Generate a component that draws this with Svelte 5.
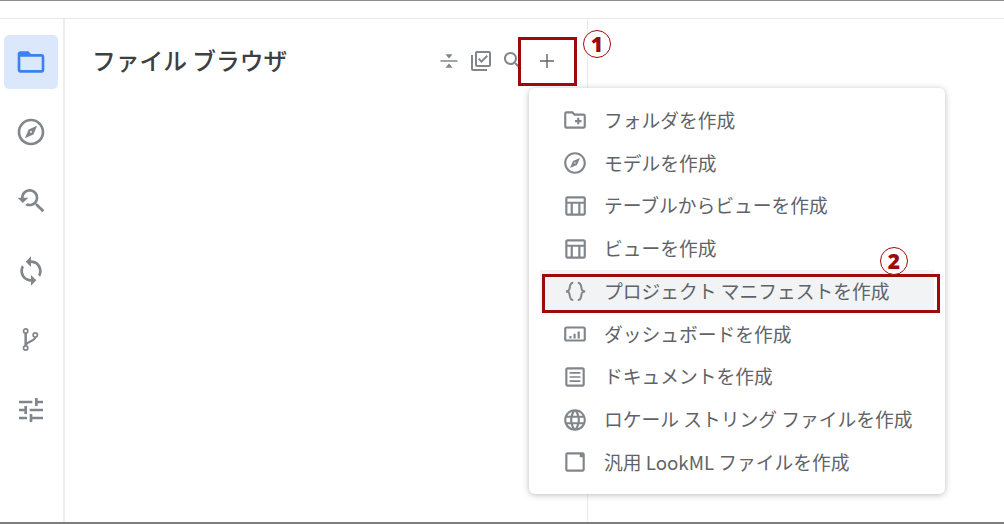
<script>
	const explore = 'M12 2C6.48 2 2 6.48 2 12s4.48 10 10 10 10-4.48 10-10S17.52 2 12 2zm0 18c-4.41 0-8-3.59-8-8s3.59-8 8-8 8 3.59 8 8-3.59 8-8 8zM7.4 16.6l6.4-2.8 2.8-6.4-6.4 2.8-2.8 6.4zm4.6-5.3c.39 0 .7.31.7.7s-.31.7-.7.7-.7-.31-.7-.7.31-.7.7-.7z';

	const railIcons = [
		{ label: 'ファイル', d: 'M20 6h-8l-2-2H4c-1.1 0-1.99.9-1.99 2L2 18c0 1.1.9 2 2 2h16c1.1 0 2-.9 2-2V8c0-1.1-.9-2-2-2zm0 12H4V8h16v10z', active: true },
		{ label: '開発', d: explore },
		{ label: '検索', d: 'M17.01 14h-.8l-.27-.27c.98-1.14 1.57-2.61 1.57-4.23 0-3.59-2.91-6.5-6.5-6.5s-6.5 3-6.5 6.5H2l3.84 4 4.16-4H6.51C6.51 7 8.53 5 11.01 5s4.5 2.01 4.5 4.5c0 2.48-2.02 4.5-4.5 4.5-.65 0-1.26-.14-1.82-.38L7.71 15.1c.97.57 2.09.9 3.3.9 1.61 0 3.08-.59 4.22-1.57l.27.27v.79l5.01 5L22 19l-4.99-5z' },
		{ label: '同期', d: 'M12 4V1L8 5l4 4V6c3.31 0 6 2.69 6 6 0 1.01-.25 1.97-.7 2.8l1.46 1.46C19.54 15.03 20 13.57 20 12c0-4.42-3.58-8-8-8zm0 14c-3.31 0-6-2.69-6-6 0-1.01.25-1.97.7-2.8L5.24 7.74C4.46 8.97 4 10.43 4 12c0 4.42 3.58 8 8 8v3l4-4-4-4v3z' },
		{ label: 'ブランチ', branch: true },
		{ label: '設定', d: 'M3 17v2h6v-2H3zM3 5v2h10V5H3zm10 16v-2h8v-2h-8v-2h-2v6h2zM7 9v2H3v2h4v2h2V9H7zm14 4v-2H11v2h10zm-6-4h2V7h4V5h-4V3h-2v6z' }
	];

	const actions = [
		{ label: 'すべて折りたたむ', d: 'M3.5 11.3h17v1.4h-17zM8.4 5.2h7.2L12 9.4zM8.4 18.8h7.2L12 14.6z' },
		{ label: '選択', d: 'M20 4v12H8V4h12m0-2H8c-1.1 0-2 .9-2 2v12c0 1.1.9 2 2 2h12c1.1 0 2-.9 2-2V4c0-1.1-.9-2-2-2zm-7.53 12L9 10.5l1.4-1.41 2.07 2.08L17.6 6 19 7.41 12.47 14zM4 6H2v14c0 1.1.9 2 2 2h14v-2H4V6z' },
		{ label: '検索', d: 'M15.5 14h-.79l-.28-.27C15.41 12.59 16 11.11 16 9.5 16 5.91 13.09 3 9.5 3S3 5.91 3 9.5 5.91 16 9.5 16c1.61 0 3.09-.59 4.23-1.57l.27.28v.79l5 4.99L20.49 19l-4.99-5zm-6 0C7.01 14 5 11.99 5 9.5S7.01 5 9.5 5 14 7.01 14 9.5 11.99 14 9.5 14z' },
		{ label: '追加', plus: true, d: 'M19 12.7h-6.3V19h-1.4v-6.3H5v-1.4h6.3V5h1.4v6.3H19z' }
	];

	const table = 'M20 3H5c-1.1 0-2 .9-2 2v14c0 1.1.9 2 2 2h15c1.1 0 2-.9 2-2V5c0-1.1-.9-2-2-2zm0 2v3H5V5h15zm-5 14h-5v-9h5v9zM5 10h3v9H5v-9zm12 9v-9h3v9h-3z';

	const menu = [
		{ text: 'フォルダを作成', d: 'M20 6h-8l-2-2H4c-1.11 0-1.99.89-1.99 2L2 18c0 1.11.89 2 2 2h16c1.11 0 2-.89 2-2V8c0-1.11-.89-2-2-2zm0 12H4V6h5.17l2 2H20v10zm-8-4h2v2h2v-2h2v-2h-2v-2h-2v2h-2z' },
		{ text: 'モデルを作成', d: explore },
		{ text: 'テーブルからビューを作成', d: table },
		{ text: 'ビューを作成', d: table },
		{ text: 'プロジェクト マニフェストを作成', braces: true, hover: true },
		{ text: 'ダッシュボードを作成', d: 'M20 5H4c-1.1 0-2 .9-2 2v10c0 1.1.9 2 2 2h16c1.1 0 2-.9 2-2V7c0-1.1-.9-2-2-2zm0 12H4V7h16v10zM6.8 13.8h2v2.4h-2zm3.8-2h2v4.4h-2zm3.8-2h2v6.4h-2z' },
		{ text: 'ドキュメントを作成', d: 'M19 5v14H5V5h14m0-2H5c-1.1 0-2 .9-2 2v14c0 1.1.9 2 2 2h14c1.1 0 2-.9 2-2V5c0-1.1-.9-2-2-2zM7 15h10v1.6H7zm0-3.8h10v1.6H7zM7 7.4h10V9H7z' },
		{ text: 'ロケール ストリング ファイルを作成', d: 'M11.99 2C6.47 2 2 6.48 2 12s4.47 10 9.99 10C17.52 22 22 17.52 22 12S17.52 2 11.99 2zm6.93 6h-2.95c-.32-1.25-.78-2.45-1.38-3.56 1.84.63 3.37 1.91 4.33 3.56zM12 4.04c.83 1.2 1.48 2.53 1.91 3.96h-3.82c.43-1.43 1.08-2.76 1.91-3.96zM4.26 14C4.1 13.36 4 12.69 4 12s.1-1.36.26-2h3.38c-.08.66-.14 1.32-.14 2s.06 1.34.14 2H4.26zm.82 2h2.95c.32 1.25.78 2.45 1.38 3.56-1.84-.63-3.37-1.9-4.33-3.56zm2.95-8H5.08c.96-1.66 2.49-2.93 4.33-3.56C8.81 5.55 8.35 6.75 8.03 8zM12 19.96c-.83-1.2-1.48-2.53-1.91-3.96h3.82c-.43 1.43-1.08 2.76-1.91 3.96zM14.34 14H9.66c-.09-.66-.16-1.32-.16-2s.07-1.35.16-2h4.68c.09.65.16 1.32.16 2s-.07 1.34-.16 2zm.25 5.56c.6-1.11 1.06-2.31 1.38-3.56h2.95c-.96 1.65-2.49 2.93-4.33 3.56zM16.36 14c.08-.66.14-1.32.14-2s-.06-1.34-.14-2h3.38c.16.64.26 1.31.26 2s-.1 1.36-.26 2h-3.38z' },
		{ text: '汎用 LookML ファイルを作成', d: 'M5 3h14c1.1 0 2 .9 2 2v14c0 1.1-.9 2-2 2H5c-1.1 0-2-.9-2-2V5c0-1.1.9-2 2-2zm0 2v14h14V7.6h-2.6V5H5z' }
	];
</script>

<div class="page">
	<div class="topbar"></div>
	<div class="main">
		<nav class="rail">
			{#each railIcons as icon}
				<button class="rail-btn" class:active={icon.active} aria-label={icon.label}>
					<svg viewBox="0 0 24 24" width="32" height="32">
						{#if icon.branch}
							<g fill="none" stroke="currentColor">
								<circle cx="8" cy="5.3" r="1.6" stroke-width="1.3" />
								<circle cx="15.2" cy="8.2" r="1.6" stroke-width="1.3" />
								<circle cx="8" cy="18" r="1.6" stroke-width="1.3" />
								<path d="M8 7v9.3" stroke-width="1.9" />
								<path d="M15.2 9.9c0 2.9-6.6 3-7.2 6.2" stroke-width="1.6" />
							</g>
						{:else}
							<path d={icon.d} fill="currentColor" fill-rule="evenodd" />
						{/if}
					</svg>
				</button>
			{/each}
		</nav>

		<section class="panel">
			<header class="panel-head">
				<h1>ファイル ブラウザ</h1>
				<div class="actions">
					{#each actions as a}
						<button class="action" class:plus={a.plus} aria-label={a.label}>
							<svg viewBox="0 0 24 24" width="24" height="24"><path d={a.d} fill="currentColor" /></svg>
						</button>
					{/each}
				</div>
			</header>
		</section>
	</div>
	<div class="bottombar"></div>

	<!-- dropdown floats over the panel -->
	<ul class="menu">
		{#each menu as item}
			<li class="menu-item" class:hover={item.hover}>
				<svg viewBox="0 0 24 24" width="26" height="26">
					{#if item.braces}
						<path d="M10.4 4.4C8.4 4.4 7.9 5.4 7.5 7L6.8 10.4C6.5 11.6 5.5 12.4 3.6 12.4 5.5 12.4 6.5 13.2 6.8 14.4L7.5 17.8C7.9 19.4 8.4 20.4 10.4 20.4M14.6 4.4C16.6 4.4 17.1 5.4 17.5 7L18.2 10.4C18.5 11.6 19.5 12.4 21.4 12.4 19.5 12.4 18.5 13.2 18.2 14.4L17.5 17.8C17.1 19.4 16.6 20.4 14.6 20.4" fill="none" stroke="currentColor" stroke-width="1.8" />
					{:else}
						<path d={item.d} fill="currentColor" fill-rule="evenodd" />
					{/if}
				</svg>
				<span>{item.text}</span>
			</li>
		{/each}
	</ul>

	<!-- annotations on top of the screenshot -->
	<div class="mark mark-one"></div>
	<div class="mark mark-two"></div>
	<div class="num num-one">1</div>
	<div class="num num-two">2</div>
</div>

<style>
	:global(body) {
		margin: 0;
		background: #fff;
	}

	.page {
		position: relative;
		height: 524px;
		display: flex;
		flex-direction: column;
		overflow: hidden;
		font-family: 'Noto Sans CJK JP', 'Noto Sans', sans-serif;
		color: #3c4043;
	}

	.topbar {
		flex-shrink: 0;
		border-top: 1px solid #8f8f8f;
		border-bottom: 1px solid #e6e7e8;
		box-sizing: border-box;
		height: 19px;
	}

	.main {
		flex: 1;
		display: flex;
		min-height: 0;
	}

	.bottombar {
		height: 2px;
		flex-shrink: 0;
		background: #7d7d7d;
	}

	.rail {
		width: 65px;
		flex-shrink: 0;
		box-sizing: border-box;
		border-right: 2px solid #eceded;
		padding: 16px 0 0 4px;
		display: flex;
		flex-direction: column;
		gap: 15.5px;
	}

	.rail-btn {
		width: 54px;
		height: 54px;
		padding: 0;
		border: 0;
		border-radius: 5px;
		background: none;
		color: #80868b;
		display: flex;
		align-items: center;
		justify-content: center;
	}

	.rail-btn.active {
		background: #dbe8fb;
		color: #3b82f0;
	}

	.panel {
		width: 523px;
		flex-shrink: 0;
		box-sizing: border-box;
		border-right: 1px solid #e8e9ea;
	}

	.panel-head {
		display: flex;
		align-items: center;
		height: 84px;
		padding: 0 26px 0 27px;
	}

	h1 {
		margin: 0;
		font-size: 23.75px;
		font-weight: 500;
		line-height: 1;
		color: #3c4043;
		flex: 1;
		position: relative;
		top: -1px;
	}

	.actions {
		display: flex;
		position: relative;
		left: -1px;
	}

	.action {
		width: 32px;
		height: 32px;
		padding: 0;
		border: 0;
		background: none;
		color: #80868b;
		display: flex;
		align-items: center;
		justify-content: center;
		position: relative;
		left: 1px;
	}

	.action.plus {
		color: #5f6368;
		left: 3px;
	}

	.menu {
		position: absolute;
		left: 529px;
		top: 88px;
		width: 416px;
		height: 406px;
		box-sizing: border-box;
		margin: 0;
		padding: 11px;
		list-style: none;
		background: #fff;
		border-radius: 6px;
		box-shadow: 0 1px 6px rgba(60, 64, 67, 0.35);
	}

	.menu-item {
		height: 42.75px;
		display: flex;
		align-items: center;
		gap: 16px;
		padding-left: 22px;
		font-size: 18.75px;
		color: #5f6368;
	}

	.menu-item span {
		margin-top: -2px;
	}

	.menu-item svg {
		flex-shrink: 0;
		color: #80868b;
	}

	.menu-item.hover {
		background: #f1f3f4;
	}

	.mark {
		position: absolute;
		box-sizing: border-box;
		border: 3px solid #9c0a0a;
	}

	.mark-one {
		left: 518px;
		top: 37px;
		width: 59px;
		height: 49px;
	}

	.mark-two {
		left: 542px;
		top: 274px;
		width: 398px;
		height: 39px;
	}

	.num {
		position: absolute;
		width: 28px;
		height: 28px;
		box-sizing: border-box;
		border: 1px solid #9c0a0a;
		border-radius: 50%;
		color: #9c0a0a;
		background: #fff;
		font-family: 'Open Sans', sans-serif;
		font-size: 21px;
		font-weight: 800;
		line-height: 26px;
		text-align: center;
	}

	.num-one {
		left: 583px;
		top: 30px;
	}

	.num-two {
		left: 880px;
		top: 247px;
	}
</style>
